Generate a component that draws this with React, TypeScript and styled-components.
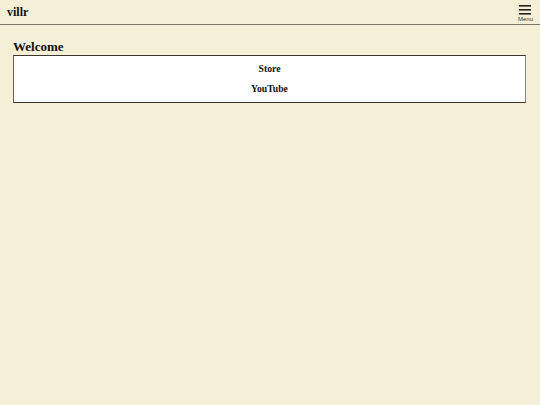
import React from "react";
import styled, { createGlobalStyle } from "styled-components";

const Global = createGlobalStyle`
  html, body { margin: 0; padding: 0; background: #f5efd8; }
  body { font-family: "Liberation Serif", "Times New Roman", serif; color: #111; }
`;

const Header = styled.header`
  height: 24px;
  display: flex;
  align-items: center;
  justify-content: space-between;
  padding: 0 7px 0 7px;
  border-bottom: 1px solid #7d7466;
`;

const Brand = styled.div`
  font-weight: bold;
  font-size: 12px;
`;

const MenuButton = styled.div`
  display: flex;
  flex-direction: column;
  align-items: center;
  gap: 1px;
  padding-top: 2px;
`;

const MenuLabel = styled.span`
  font-family: "Liberation Sans", Arial, sans-serif;
  font-size: 6px;
  color: #333;
  line-height: 6px;
`;

const Main = styled.main`
  padding: 14px 14px 0 13px;
`;

const Title = styled.h2`
  margin: 0 0 1px 0;
  font-size: 13px;
  font-weight: bold;
  line-height: 15px;
`;

const LinkBox = styled.div`
  background: #fff;
  border: 1px solid #3e352c;
  border-left-color: #6e665c;
  border-right-color: #8a8276;
  padding: 6px 0 6px;
  display: flex;
  flex-direction: column;
  align-items: center;
  gap: 6px;
`;

const LinkItem = styled.a`
  font-size: 9.7px;
  font-weight: bold;
  color: #111;
  text-decoration: none;
  line-height: 14px;
`;

export default function App() {
  return (
    <>
      <Global />
      <Header>
        <Brand>villr</Brand>
        <MenuButton>
          <svg width="12" height="10" viewBox="0 0 12 10">
            <rect x="0" y="0" width="12" height="1.6" fill="#222" />
            <rect x="0" y="4" width="12" height="1.6" fill="#222" />
            <rect x="0" y="8" width="12" height="1.6" fill="#222" />
          </svg>
          <MenuLabel>Menu</MenuLabel>
        </MenuButton>
      </Header>
      <Main>
        <Title>Welcome</Title>
        <LinkBox>
          <LinkItem href="#">Store</LinkItem>
          <LinkItem href="#">YouTube</LinkItem>
        </LinkBox>
      </Main>
    </>
  );
}
